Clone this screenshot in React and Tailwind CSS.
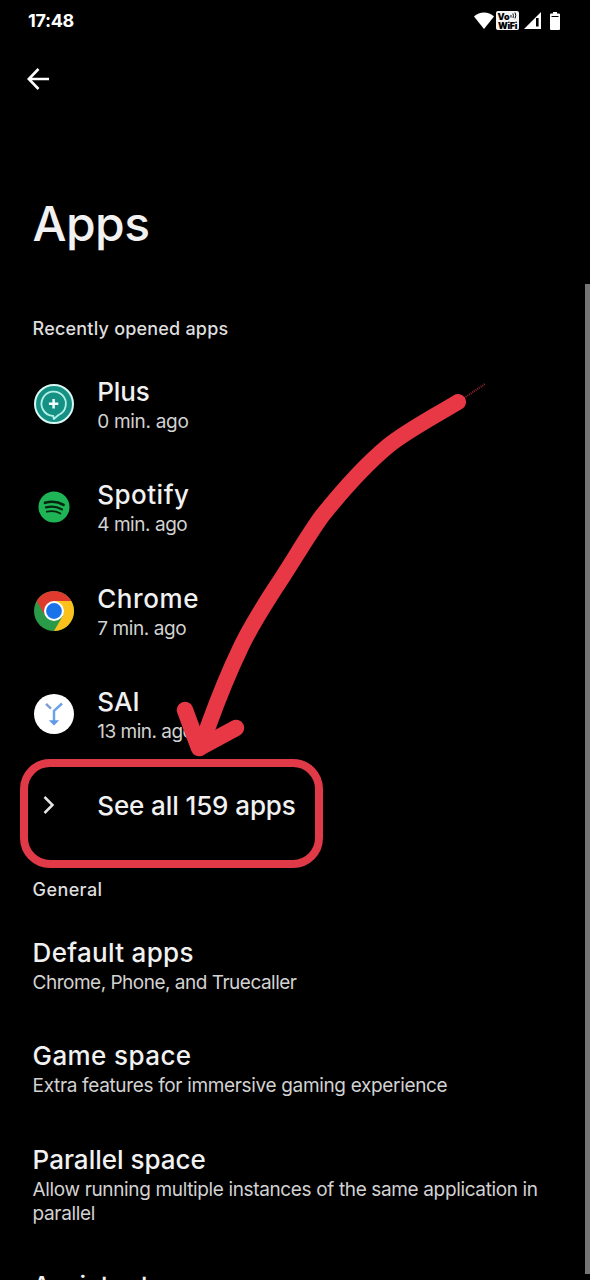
import React from 'react';

const recentApps = [
  { name: 'Plus', time: '0 min. ago', icon: PlusIcon, nameSpacing: 'tracking-[-0.1px]', timeSpacing: 'tracking-[-0.3px]' },
  { name: 'Spotify', time: '4 min. ago', icon: SpotifyIcon, nameSpacing: 'tracking-[0.5px]', timeSpacing: 'tracking-[-0.45px]' },
  { name: 'Chrome', time: '7 min. ago', icon: ChromeIcon, nameSpacing: 'tracking-[0.6px]', timeSpacing: 'tracking-[-0.4px]' },
  { name: 'SAI', time: '13 min. ago', icon: SaiIcon, nameSpacing: 'tracking-[0.1px]', timeSpacing: 'tracking-[-0.5px]' },
];

const generalItems = [
  { title: 'Default apps', text: 'Chrome, Phone, and Truecaller', titleSpacing: 'tracking-[0.3px]', textSpacing: 'tracking-[-0.5px]' },
  { title: 'Game space', text: 'Extra features for immersive gaming experience', titleSpacing: 'tracking-[0.4px]', textSpacing: 'tracking-[-0.34px]' },
  { title: 'Parallel space', text: 'Allow running multiple instances of the same application in parallel', titleSpacing: 'tracking-[0px]', textSpacing: 'tracking-[-0.36px]' },
];

function PlusIcon() {
  return (
    <svg viewBox="0 0 40 40" className="w-10 h-10">
      <circle cx="20" cy="20" r="19" fill="#149184" stroke="#d8f8f3" strokeWidth="2" />
      <path
        d="M18.2 31.9 A12.2 12.2 0 1 1 24.5 31 L19.8 35 L19.3 32 Z"
        fill="none"
        stroke="#b4efe7"
        strokeWidth="1.8"
        strokeLinejoin="round"
      />
      <path d="M19.6 15 V24.4 M14.9 19.7 H24.3" stroke="#f2fffd" strokeWidth="2.5" />
    </svg>
  );
}

function SpotifyIcon() {
  return (
    <svg viewBox="0 0 40 40" className="w-10 h-10">
      <circle cx="20" cy="20" r="15.5" fill="#1fb455" />
      <g fill="none" stroke="#06240f" strokeLinecap="round">
        <path d="M11 15.8 C17 14 24 14.6 29.6 17.8" strokeWidth="2.6" />
        <path d="M12 20.4 C17.5 18.9 23 19.6 28 22.4" strokeWidth="2.2" />
        <path d="M12.8 24.7 C17.5 23.6 22 24 26.4 26.5" strokeWidth="1.8" />
      </g>
    </svg>
  );
}

function ChromeIcon() {
  return (
    <svg viewBox="0 0 40 40" className="w-10 h-10">
      <circle cx="20" cy="20" r="20" fill="#2a9a48" />
      <path d="M20 10 H37.3 A20 20 0 0 1 20 40 L28.7 25 Z" fill="#fcc21b" />
      <path d="M2.7 10 A20 20 0 0 1 37.3 10 H20 L11.3 25 Z" fill="#de3a2d" />
      <circle cx="20" cy="20" r="10" fill="#fff" />
      <circle cx="20" cy="20" r="7.9" fill="#1a73e8" />
    </svg>
  );
}

function SaiIcon() {
  return (
    <svg viewBox="0 0 40 40" className="w-10 h-10">
      <circle cx="20" cy="20" r="20" fill="#fff" />
      <g fill="none" strokeWidth="2.5">
        <path d="M12 9.8 L17 14.6" stroke="#7d9fd0" />
        <path d="M28 9.5 L20 16.8 V27.5" stroke="#6ba2ea" strokeLinejoin="round" />
      </g>
      <path d="M14.8 26.3 H25.2 L20 31.6 Z" fill="#5f9aea" />
    </svg>
  );
}

const StatusBar = () => (
  <div className="h-10 shrink-0 flex items-center justify-between pl-7 pr-[29px] pt-px">
    <span className="text-[18px] leading-6 font-bold text-white tracking-[-0.3px]">17:48</span>
    <div className="flex items-center">
      <svg viewBox="0 0 20 17" className="w-5 h-[17px]" fill="#fff">
        <path d="M0 4.6 C5.5 -0.8 14.5 -0.8 20 4.6 L10 17 Z" />
      </svg>
      <div className="ml-[2px] w-[23px] h-[19px] rounded-[2px] bg-[#f5f5f5] text-black flex flex-col items-center justify-center">
        <div className="flex h-[9px] w-[20px]">
          <span className="text-[9px] leading-[9px] font-black">Vo</span>
          <svg viewBox="0 0 7 7" className="w-[7px] h-[7px]" fill="none" stroke="#111" strokeWidth="1">
            <path d="M1 3 V5.5 M2.8 1.5 Q4 3.5 3 6 M5 0.5 Q6.5 3.5 5 6.5" />
          </svg>
        </div>
        <span className="text-[9px] leading-[9px] font-black tracking-[-0.3px]">WiFi</span>
      </div>
      <svg viewBox="0 0 17 17" className="ml-[5px] w-[17px] h-[17px]">
        <path d="M17 0 V17 H0 Z" fill="#fff" />
        <path d="M13.3 6 V14.5" stroke="#000" strokeWidth="2.6" />
      </svg>
      <svg viewBox="0 0 10 18" className="ml-[9px] mr-px w-[10px] h-[18px]">
        <path d="M3 0 H7 V1.5 H9 Q10 1.5 10 2.5 V17 Q10 18 9 18 H1 Q0 18 0 17 V2.5 Q0 1.5 1 1.5 H3 Z" fill="#fff" />
        <path d="M1.5 4.5 H8.5" stroke="#000" strokeWidth="1" />
      </svg>
    </div>
  </div>
);

const SectionLabel = ({ children, className }) => (
  <h2 className={`h-12 shrink-0 flex items-center px-[32.6px] text-[18px] font-medium text-[#dedede] ${className}`}>
    {children}
  </h2>
);

const App = () => {
  return (
    <div className="relative w-[590px] h-[1280px] overflow-hidden bg-black flex flex-col font-['Inter',sans-serif]">
      <StatusBar />

      <div className="h-[78px] shrink-0 flex items-center pl-[27px]">
        <svg viewBox="0 0 22 22" className="w-[22px] h-[22px]" fill="none" stroke="#fff" strokeWidth="2.6">
          <path d="M22 11 H2 M11.5 1 L1.8 11 L11.5 21" />
        </svg>
      </div>

      <h1 className="mt-[76px] h-[60px] shrink-0 pl-[32.6px] text-[48px] leading-[60px] font-medium text-[#f1f1f1] tracking-[-0.6px]">
        Apps
      </h1>

      <div className="mt-[50px] shrink-0">
        <SectionLabel className="tracking-[0.2px]">Recently opened apps</SectionLabel>
        {recentApps.map(({ name, time, icon: Icon, nameSpacing, timeSpacing }) => (
          <div key={name} className="h-[103.5px] flex items-center gap-[23.6px] pl-[33.6px]">
            <Icon />
            <div className="pt-[1.4px]">
              <div className={`text-[26px] leading-[33px] font-medium text-[#f1f1f1] ${nameSpacing}`}>{name}</div>
              <div className={`mt-[2px] text-[19px] leading-6 text-[#d2d2d2] ${timeSpacing}`}>{time}</div>
            </div>
          </div>
        ))}
        <div className="h-[78px] mb-[21px] flex items-center gap-[23.6px] pl-[33.6px]">
          <div className="w-10 flex">
            <svg viewBox="0 0 12 18" className="ml-[9px] w-3 h-[18px]" fill="none" stroke="#e4e4e4" strokeWidth="2.5">
              <path d="M1.5 1 L9.5 9 L1.5 17" />
            </svg>
          </div>
          <div className="text-[26px] leading-[33px] font-medium text-[#f1f1f1] tracking-[-0.1px]">See all 159 apps</div>
        </div>

        <SectionLabel className="tracking-[0.4px]">General</SectionLabel>
        {generalItems.map((item) => (
          <div key={item.title} className="min-h-[103.5px] pt-[22.7px] pb-[21.8px] pl-[32.6px] pr-[40px]">
            <div className={`text-[26px] leading-[33px] font-medium text-[#f1f1f1] ${item.titleSpacing}`}>{item.title}</div>
            <div className={`mt-[2px] text-[19px] leading-6 text-[#d2d2d2] ${item.textSpacing}`}>{item.text}</div>
          </div>
        ))}
        <div className="pt-[22px] pl-[32.6px]">
          <div className="text-[26px] leading-[33px] font-medium text-[#f1f1f1] tracking-[0.2px]">Assistant</div>
        </div>
      </div>

      {/* Scrollbar */}
      <div className="absolute right-0 top-[284px] w-[5px] h-[990px] bg-[#757575]" />

      {/* Highlight box and hand-drawn arrow over the list */}
      <div className="absolute left-[20px] top-[759px] w-[303px] h-[109px] rounded-[30px] border-8 border-[#e03a48]" />
      <svg viewBox="0 0 590 1280" className="absolute inset-0 w-[590px] h-[1280px] pointer-events-none" fill="none" stroke="#e83845" strokeLinecap="round" strokeLinejoin="round">
        <path d="M464 398 L485 384" strokeWidth="2" strokeLinecap="butt" strokeDasharray="1 1" stroke="#8f2530" />
        <path d="M458 402 C435 416 408 430 388 446 C364 466 342 491 322 516 C306 538 291 565 274 590 C262 609 249 629 240 649 C227 676 217 702 209 724 L200 748" strokeWidth="16" />
        <path d="M185 710 L199 748 L236 728" strokeWidth="16.5" />
      </svg>
    </div>
  );
};

export default App;
